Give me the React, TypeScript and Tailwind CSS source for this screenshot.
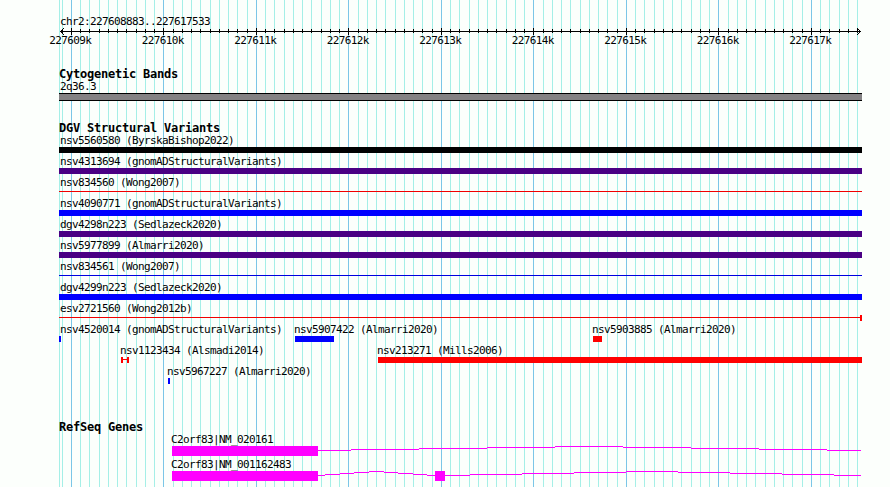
import React from "react"

const LEFT = 59
const WIDTH = 803

interface Variant {
  text: string
  color: string
  kind?: "bar" | "line" | "capped"
  endCap?: boolean
  // pixel range on the canvas, the whole view when left out
  from?: number
  to?: number
}

const gridTicks = Array.from({ length: 87 }, (_, i) => i - 1).map((k) => ({
  x: Math.round(70.9 + 9.249 * k),
  major: k % 10 === 0,
}))

const fullVariants: Variant[] = [
  { text: "nsv5560580 (ByrskaBishop2022)", color: "#000000" },
  { text: "nsv4313694 (gnomADStructuralVariants)", color: "#4a0084" },
  { text: "nsv834560 (Wong2007)", color: "#f00000", kind: "line" },
  { text: "nsv4090771 (gnomADStructuralVariants)", color: "#0000ff" },
  { text: "dgv4298n223 (Sedlazeck2020)", color: "#4a0084" },
  { text: "nsv5977899 (Almarri2020)", color: "#4a0084" },
  { text: "nsv834561 (Wong2007)", color: "#0000e0", kind: "line" },
  { text: "dgv4299n223 (Sedlazeck2020)", color: "#0000ff" },
  { text: "esv2721560 (Wong2012b)", color: "#f00000", kind: "line", endCap: true },
]

const partialRows: Variant[][] = [
  [
    { from: 59, to: 61, text: "nsv4520014 (gnomADStructuralVariants)", color: "#0000ff" },
    { from: 295, to: 334, text: "nsv5907422 (Almarri2020)", color: "#0000ff" },
    { from: 593, to: 602, text: "nsv5903885 (Almarri2020)", color: "#ff0000" },
  ],
  [
    { from: 121, to: 129, text: "nsv1123434 (Alsmadi2014)", color: "#ff0000", kind: "capped" },
    { from: 378, to: 862, text: "nsv213271 (Mills2006)", color: "#ff0000" },
  ],
  [{ from: 168, to: 170, text: "nsv5967227 (Almarri2020)", color: "#0000ff" }],
]

// introns are [start, end, rise], rise counted up from the base line
const genes = [
  {
    text: "C2orf83|NM_020161",
    exons: [[172, 318]],
    introns: [
      [318, 351, 0], [351, 419, 1], [419, 487, 2], [487, 555, 3], [555, 623, 4],
      [623, 691, 3], [691, 759, 2], [759, 827, 1], [827, 861, 0],
    ],
  },
  {
    text: "C2orf83|NM_001162483",
    exons: [[172, 318], [435, 445]],
    introns: [
      [318, 325, 0], [325, 340, 1], [340, 354, 2], [354, 369, 3], [369, 384, 4],
      [384, 398, 3], [398, 413, 2], [413, 427, 1], [427, 435, 0],
      [445, 470, 0], [470, 522, 1], [522, 574, 2], [574, 626, 3], [626, 678, 4],
      [678, 730, 3], [730, 782, 2], [782, 834, 1], [834, 861, 0],
    ],
  },
]

const Heading: React.FC<{ text: string }> = ({ text }) => (
  <h2 className="h-3 text-[12px] leading-[13px] font-bold tracking-[-0.224px]">{text}</h2>
)

const Grid = () => (
  <svg className="absolute inset-0" width="890" height="487" shapeRendering="crispEdges">
    <rect x={LEFT} width="1" height="487" fill="#a5efe7" />
    {gridTicks.map(({ x, major }) => (
      <rect key={x} x={x} width="1" height="487" fill={major ? "#7bc6e7" : "#a5efe7"} />
    ))}
  </svg>
)

const Ruler = () => (
  <div>
    <svg className="block h-[7px] overflow-visible" width="890" shapeRendering="crispEdges">
      <rect x="60" y="4" width="801" height="1" />
      {gridTicks.map(({ x, major }) => (
        <rect key={x} x={x} y={major ? 1 : 2} width="1" height={major ? 7 : 4} />
      ))}
      {[-3, -2, -1, 1, 2, 3].map((d) => (
        <React.Fragment key={d}>
          <rect x={60 + Math.abs(d)} y={4 + d} width="1" height="1" />
          <rect x={860 - Math.abs(d)} y={4 + d} width="1" height="1" />
        </React.Fragment>
      ))}
    </svg>
    <div className="flex pl-6">
      {gridTicks
        .filter((t) => t.major)
        .map(({ x }, i) => (
          <span key={x} className="w-[92.5px] text-center">{`${227609 + i}k`}</span>
        ))}
    </div>
  </div>
)

const Glyph: React.FC<{ variant: Variant }> = ({ variant }) => {
  const { from = LEFT, to = LEFT + WIDTH, color, kind = "bar", endCap } = variant
  const style = { width: to - from }

  if (kind === "bar") return <div className="h-1.5" style={{ ...style, backgroundColor: color }} />

  return (
    <div
      className={`flex h-1.5 ${kind === "capped" ? "border-x-2" : ""}`}
      style={{ ...style, borderColor: color }}
    >
      <div className="mt-0.5 h-px flex-1" style={{ backgroundColor: color }} />
      {endCap && <div className="w-0.5 bg-[#ff0000]" />}
    </div>
  )
}

const VariantItem: React.FC<{ variant: Variant }> = ({ variant }) => (
  <>
    <div className={`whitespace-pre ${(variant.from ?? LEFT) === LEFT ? "pl-px" : "-ml-px"}`}>
      {variant.text}
    </div>
    <Glyph variant={variant} />
  </>
)

export default function App() {
  return (
    <main className="relative h-[487px] w-[890px] overflow-hidden bg-[#fcfffc] font-['DejaVu_Sans_Mono',monospace] text-[11px] leading-[13px] tracking-[-0.622px] text-black">
      <Grid />
      <div className="relative flex flex-col pt-[15px]">
        <p className="h-3 pl-[60px]">chr2:227608883..227617533</p>
        <Ruler />

        <section className="mt-[21px] w-[862px] pl-[59px]">
          <Heading text="Cytogenetic Bands" />
          <p className="pl-px">2q36.3</p>
          <div className="h-2 border-y border-black bg-[#848284]" />
        </section>

        <section className="mt-[21px]">
          <div className="pl-[59px]">
            <Heading text="DGV Structural Variants" />
            <ul className="flex flex-col gap-0.5">
              {fullVariants.map((variant) => (
                <li key={variant.text}>
                  <VariantItem variant={variant} />
                </li>
              ))}
            </ul>
          </div>
          <div className="flex flex-col gap-0.5 pt-0.5">
            {partialRows.map((row) => (
              <div key={row[0].text} className="relative h-[19px]">
                {row.map((variant) => (
                  <div key={variant.text} className="absolute" style={{ left: variant.from }}>
                    <VariantItem variant={variant} />
                  </div>
                ))}
              </div>
            ))}
          </div>
        </section>

        <section className="mt-[37px]">
          <div className="pl-[59px]">
            <Heading text="RefSeq Genes" />
          </div>
          <ul className="flex flex-col gap-0.5">
            {genes.map((gene) => (
              <li key={gene.text}>
                <p className="pl-[171px]">{gene.text}</p>
                <svg
                  className="block"
                  width="890"
                  height="10"
                  fill="#ff00ff"
                  shapeRendering="crispEdges"
                >
                  {gene.exons.map(([from, to]) => (
                    <rect key={from} x={from} width={to - from} height="10" />
                  ))}
                  {gene.introns.map(([from, to, rise]) => (
                    <rect key={from} x={from} y={4 - rise} width={to - from} height="1" />
                  ))}
                </svg>
              </li>
            ))}
          </ul>
        </section>
      </div>
    </main>
  )
}
